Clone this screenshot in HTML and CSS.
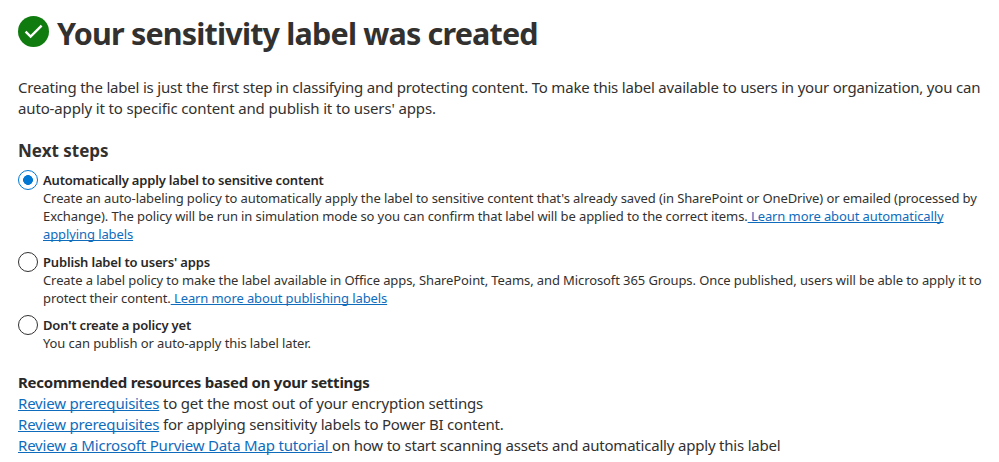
FILE: index.html
```html
<!DOCTYPE html>
<html lang="en">
<head>
    <meta charset="UTF-8">
    <meta name="viewport" content="width=device-width, initial-scale=1.0">
    <title>Your sensitivity label was created</title>
    <link rel="stylesheet" href="styles.css">
</head>
<body>
    <div class="header">
        <svg class="check-icon" viewBox="0 0 31 31">
            <circle cx="15.5" cy="15.5" r="15.5" fill="#107c10"/>
            <path d="M7.6 15.6l5 5L23.6 9.6" fill="none" stroke="#fff" stroke-width="2.4"/>
        </svg>
        <h1>Your sensitivity label was created</h1>
    </div>

    <p class="intro">
        <span class="line">Creating the label is just the first step in classifying and protecting content. To make this label available to users in your organization, you can</span>
        <span class="line">auto-apply it to specific content and publish it to users' apps.</span>
    </p>

    <h2>Next steps</h2>

    <div class="options">
        <div class="option">
            <input type="radio" name="step" id="autoApply" checked>
            <div class="option-text">
                <label for="autoApply">Automatically apply label to sensitive content</label>
                <span class="line">Create an auto-labeling policy to automatically apply the label to sensitive content that's already saved (in SharePoint or OneDrive) or emailed (processed by</span>
                <span class="line">Exchange). The policy will be run in simulation mode so you can confirm that label will be applied to the correct items.<a href="#"> Learn more about automatically</a></span>
                <span class="line"><a href="#">applying labels</a></span>
            </div>
        </div>
        <div class="option">
            <input type="radio" name="step" id="publish">
            <div class="option-text">
                <label for="publish">Publish label to users' apps</label>
                <span class="line">Create a label policy to make the label available in Office apps, SharePoint, Teams, and Microsoft 365 Groups. Once published, users will be able to apply it to</span>
                <span class="line">protect their content.<a href="#"> Learn more about publishing labels</a></span>
            </div>
        </div>
        <div class="option">
            <input type="radio" name="step" id="noPolicy">
            <div class="option-text">
                <label for="noPolicy">Don't create a policy yet</label>
                <span class="line">You can publish or auto-apply this label later.</span>
            </div>
        </div>
    </div>

    <div class="resources">
        <h3>Recommended resources based on your settings</h3>
        <span class="line"><a href="#">Review prerequisites</a> to get the most out of your encryption settings</span>
        <span class="line"><a href="#">Review prerequisites</a> for applying sensitivity labels to Power BI content.</span>
        <span class="line"><a href="#">Review a Microsoft Purview Data Map tutorial </a>on how to start scanning assets and automatically apply this label</span>
    </div>
</body>
</html>
```
FILE: styles.css
```css
body {
    margin: 0;
    padding: 14px 0 0 18px;
    background-color: #fff;
    color: #323130;
    font-family: "Noto Sans", sans-serif;
}
h1, h2, h3, p {
    margin: 0;
}
.line {
    display: block;
    white-space: nowrap;
}
.header {
    display: flex;
    align-items: flex-start;
    gap: 8px;
    height: 40px;
}
.check-icon {
    width: 31px;
    height: 31px;
    margin-top: 2px;
}
h1 {
    font-size: 30.5px;
    line-height: 39px;
    letter-spacing: -0.82px;
    white-space: nowrap;
}
.intro {
    margin-top: 23px;
    font-size: 15px;
    line-height: 21px;
    letter-spacing: -0.2px;
}
.intro .line:last-child {
    letter-spacing: -0.14px;
}
h2 {
    margin-top: 20px;
    font-size: 17px;
    line-height: 24px;
}
.options {
    margin-top: 8px;
}
.option {
    display: flex;
    gap: 5px;
    margin-bottom: 9px;
}
.option:first-child {
    margin-bottom: 10px;
}
.option-text {
    font-size: 13px;
    line-height: 18px;
    letter-spacing: -0.1px;
}
.option-text label {
    display: block;
    color: #292827;
    font-weight: 600;
    letter-spacing: -0.18px;
}
input[type="radio"] {
    appearance: none;
    box-sizing: border-box;
    flex: none;
    width: 20px;
    height: 20px;
    margin: -1px 0 0;
    border: 1px solid #323130;
    border-radius: 50%;
}
input[type="radio"]:checked {
    border-color: #0078d4;
    background: radial-gradient(circle, #0078d4 4.6px, transparent 5.2px);
}
a {
    color: #0f6cbd;
    text-decoration: underline;
    text-decoration-skip-ink: none;
}
.resources {
    margin-top: 20px;
    font-size: 15px;
    line-height: 21px;
    letter-spacing: -0.2px;
}
h3 {
    color: #292827;
    font-size: 15px;
    line-height: 21px;
    letter-spacing: -0.25px;
}
```
